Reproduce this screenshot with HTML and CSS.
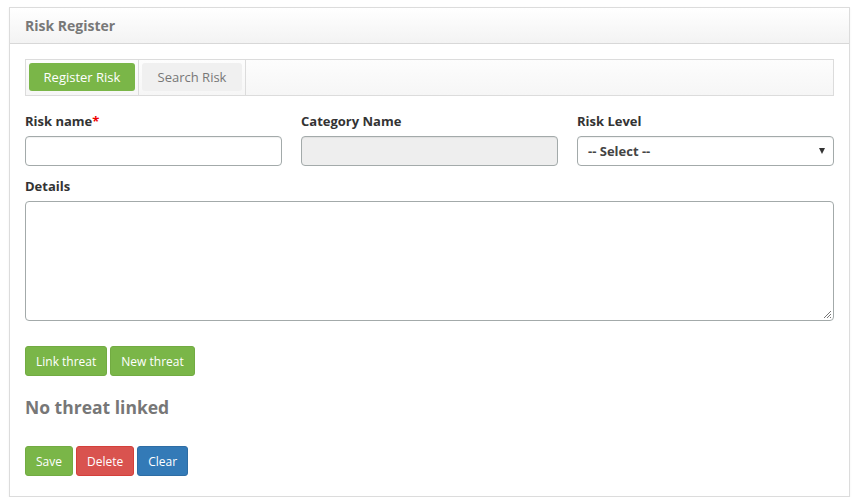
FILE: index.html
```html
<!DOCTYPE html>
<html>
<head>
<meta charset="utf-8">
<link rel="stylesheet" href="styles.css">
</head>
<body>
<div class="panel">
  <div class="panel-head">Risk Register</div>
  <div class="panel-body">
    <div class="tabs">
      <div class="tab active"><span>Register Risk</span></div>
      <div class="tab"><span>Search Risk</span></div>
    </div>
    <div class="row3">
      <div class="field">
        <label>Risk name<span class="req">*</span></label>
        <div class="input"></div>
      </div>
      <div class="field">
        <label>Category Name</label>
        <div class="input disabled"></div>
      </div>
      <div class="field">
        <label>Risk Level</label>
        <div class="input select"><span>-- Select --</span><span class="caret"></span></div>
      </div>
    </div>
    <div class="field">
      <label>Details</label>
      <div class="textarea"><svg class="grip" width="9" height="9" viewBox="0 0 9 9"><path d="M8 1L1 8M8 4L4 8M8 7L7 8" stroke="#777" stroke-width="1"/></svg></div>
    </div>
    <div class="btns threat-btns">
      <button class="btn green">Link threat</button>
      <button class="btn green">New threat</button>
    </div>
    <h3 class="empty">No threat linked</h3>
    <div class="btns">
      <button class="btn green">Save</button>
      <button class="btn red">Delete</button>
      <button class="btn blue">Clear</button>
    </div>
  </div>
</div>
</body>
</html>
```

FILE: styles.css
```css
html, body { margin: 0; padding: 0; background: #fff; }
body {
  padding: 7px 9px 0 9px;
  font-family: "Open Sans", "Noto Sans", sans-serif;
  font-size: 13px;
  color: #333;
}
.panel {
  border: 1px solid #dcdcdc;
  box-shadow: 0 1px 2px rgba(0,0,0,0.06);
  height: 490px;
  box-sizing: border-box;
}
.panel-head {
  height: 36px;
  box-sizing: border-box;
  padding: 0 15px;
  display: flex;
  align-items: center;
  font-weight: bold;
  font-size: 14px;
  color: #787878;
  background: linear-gradient(#ffffff, #f3f3f3);
  border-bottom: 1px solid #d8d8d8;
}
.panel-body { padding: 15px 15px 0 15px; }
.tabs {
  display: flex;
  height: 37px;
  box-sizing: border-box;
  border: 1px solid #dcdcdc;
  background: linear-gradient(#fdfdfd, #f6f6f6);
}
.tab {
  display: flex;
  padding: 3px 3px 4px 3px;
  border-right: 1px solid #dcdcdc;
}
.tab span {
  display: flex;
  align-items: center;
  justify-content: center;
  height: 28px;
  color: #777;
  background: #f0f0f0;
  border-radius: 3px;
  box-sizing: border-box;
}
.tab:first-child span { width: 106px; }
.tab:nth-child(2) span { width: 100px; }
.tab.active span { background: #7ab648; color: #fff; }
.row3 {
  display: grid;
  grid-template-columns: 1fr 1fr 1fr;
  column-gap: 19px;
  margin-top: 16px;
}
.field { margin-bottom: 11px; }
label {
  display: block;
  font-weight: bold;
  font-size: 13px;
  line-height: 18px;
  margin-bottom: 6px;
  color: #333;
}
.req { color: #e00; }
.input {
  height: 30px;
  box-sizing: border-box;
  border: 1px solid #a3aaaa;
  border-radius: 4px;
  background: #fff;
  box-shadow: inset 0 1px 1px rgba(0,0,0,0.06);
}
.input.disabled { background: #eeeeee; }
.input.select {
  display: flex;
  align-items: center;
  justify-content: space-between;
  padding: 0 8px 0 10px;
  font-weight: bold;
  color: #444;
}
.caret {
  width: 0; height: 0;
  border-left: 3px solid transparent;
  border-right: 3px solid transparent;
  border-top: 6px solid #333;
}
.textarea {
  height: 120px;
  box-sizing: border-box;
  border: 1px solid #a3aaaa;
  border-radius: 4px;
  position: relative;
}
.grip { position: absolute; right: 1px; bottom: 1px; }
.btns { display: flex; gap: 3px; }
.threat-btns { margin-top: 25px; }
.btn {
  height: 30px;
  font-family: inherit;
  font-size: 12px;
  color: #fff;
  border: 1px solid transparent;
  border-radius: 3px;
  padding: 0 10px;
  cursor: pointer;
}
.green { background: #7ab648; border-color: #72ab42; }
.red { background: #d9534f; border-color: #d43f3a; }
.blue { background: #337ab7; border-color: #2e6da4; }
.empty {
  margin: 19px 0 27px 0;
  font-size: 17.5px;
  line-height: 24px;
  font-weight: bold;
  color: #777;
}
```
